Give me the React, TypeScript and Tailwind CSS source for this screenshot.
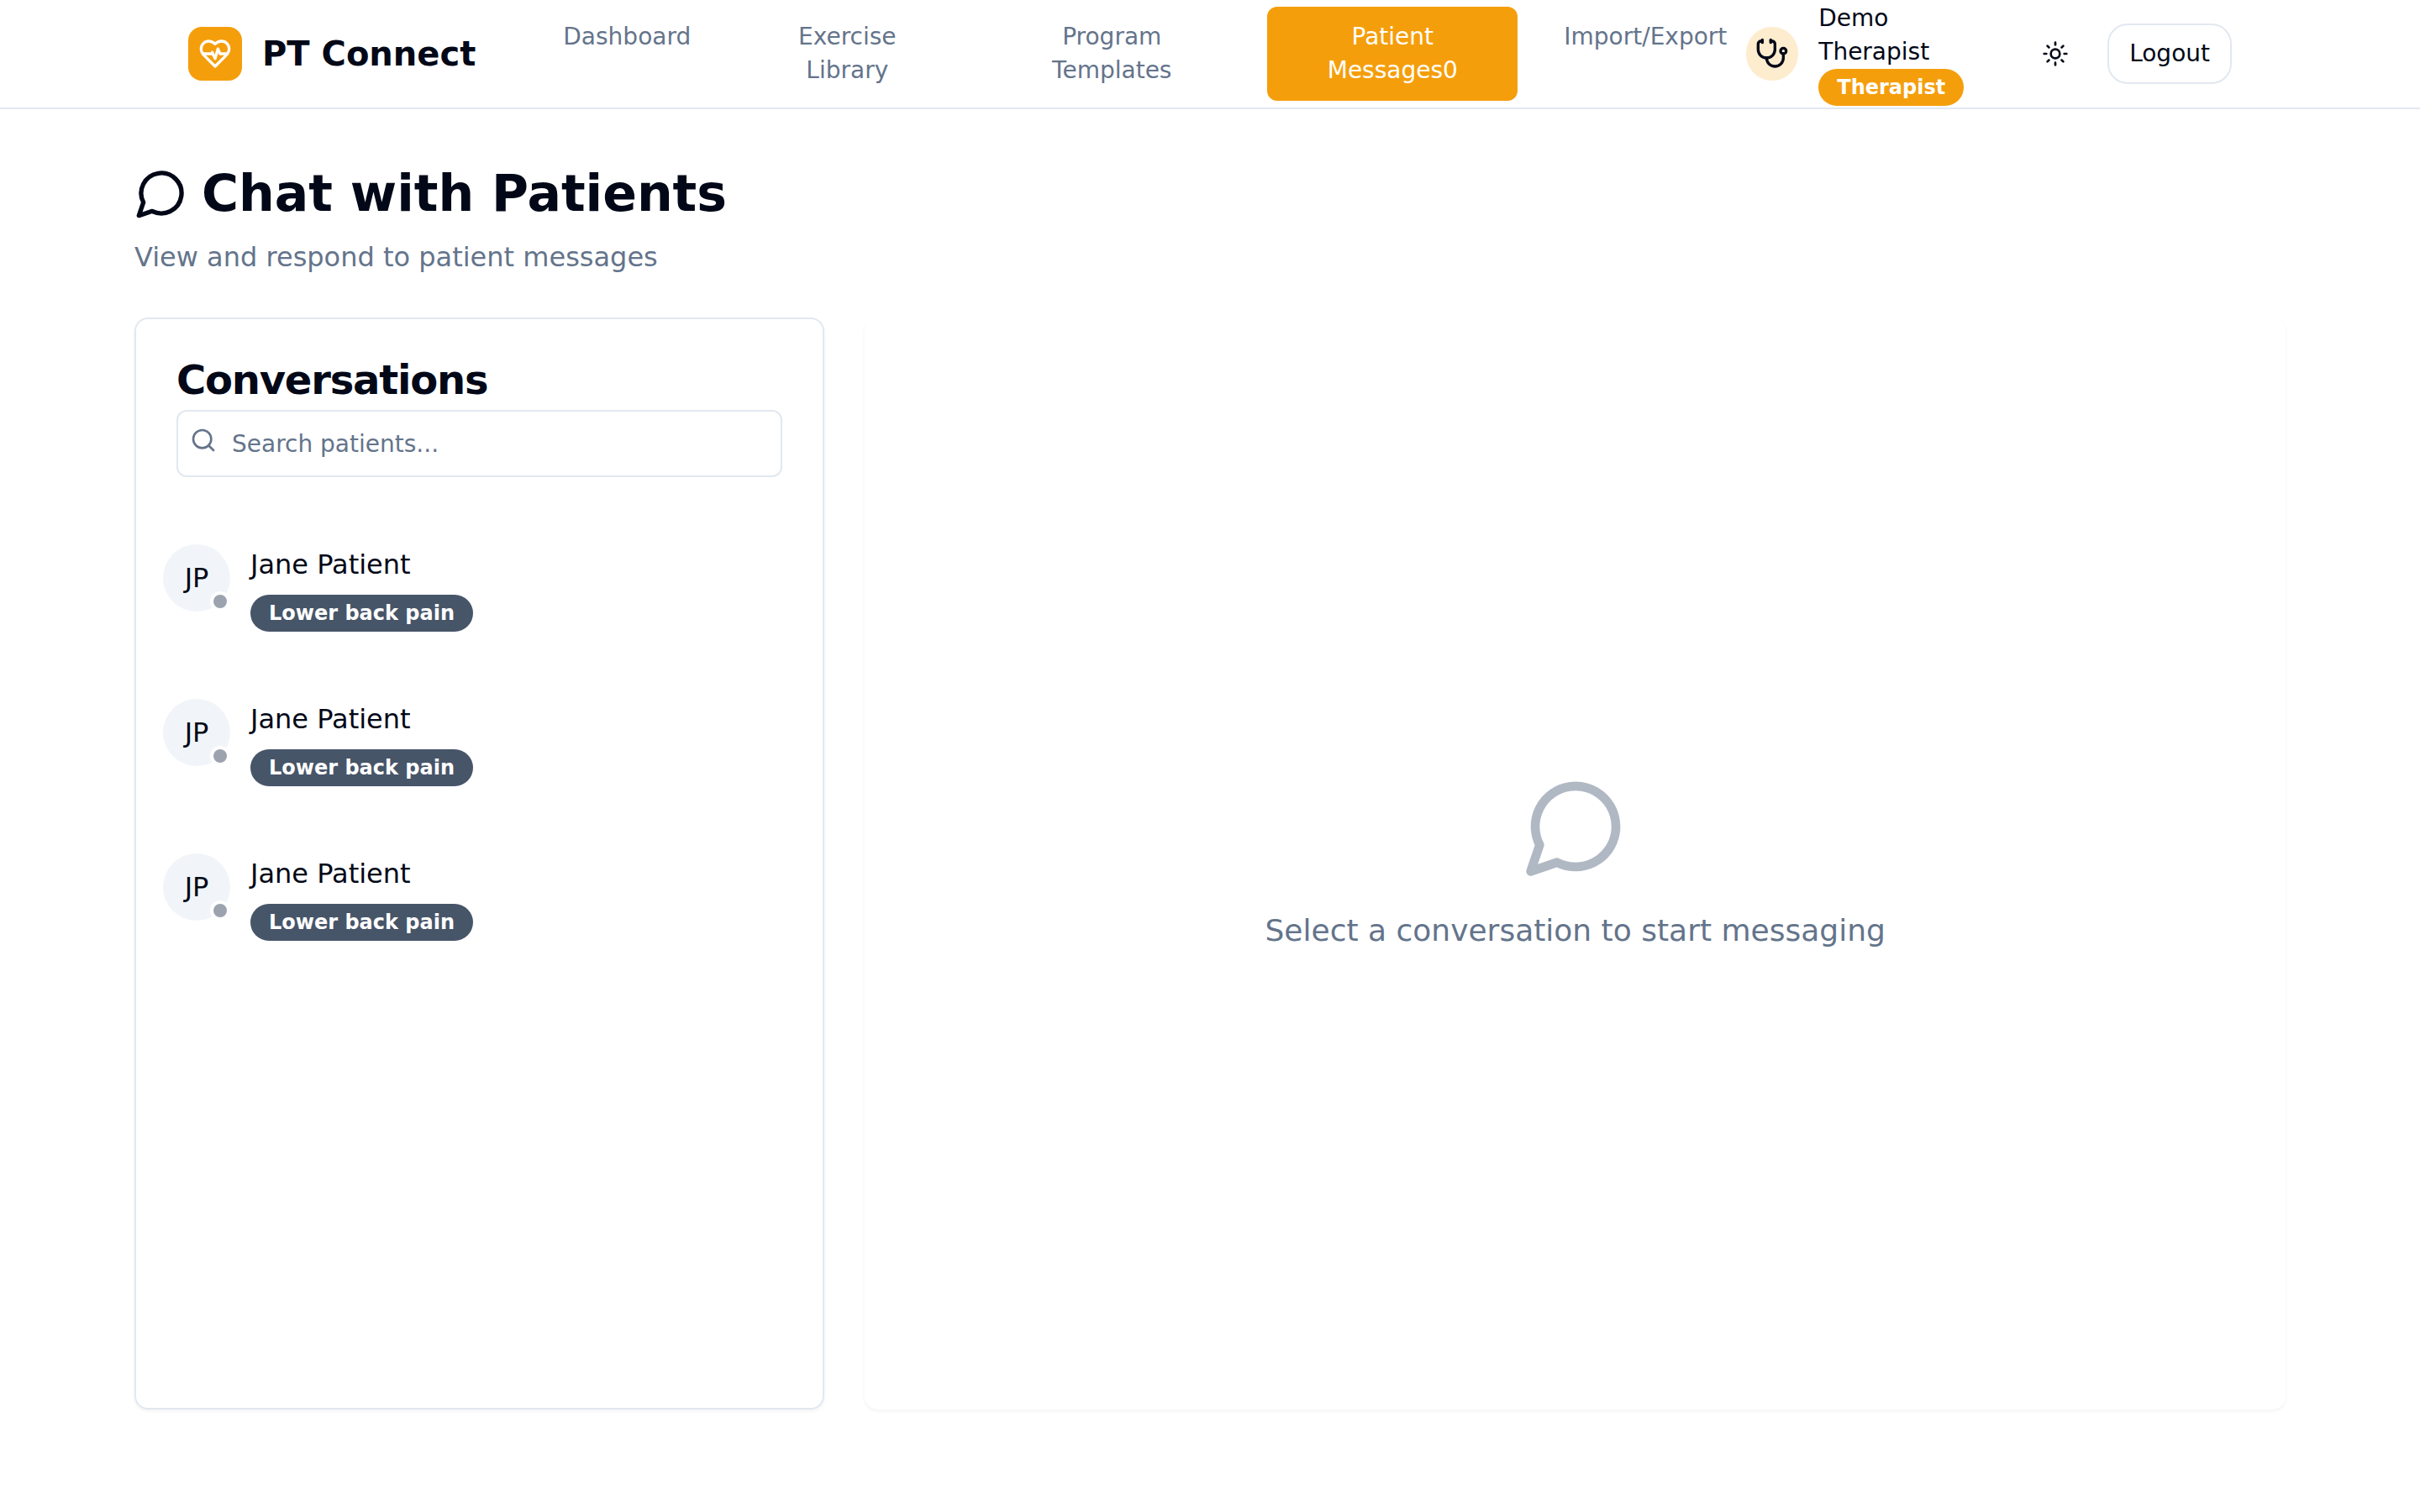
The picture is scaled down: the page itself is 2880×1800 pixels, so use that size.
import React, { useState } from 'react';
import { Search, Stethoscope, Sun } from 'lucide-react';

const navItems = [
  { lines: ['Dashboard'], width: 'w-[248px]' },
  { lines: ['Exercise', 'Library'], width: 'w-[260px]' },
  { lines: ['Program', 'Templates'], width: 'w-[354px]' },
  { lines: ['Patient', 'Messages0'], width: 'w-[298px]', active: true },
  { lines: ['Import/Export'], width: 'w-[288px]' },
];

const patients = [
  { id: 1, name: 'Jane Patient', initials: 'JP', condition: 'Lower back pain' },
  { id: 2, name: 'Jane Patient', initials: 'JP', condition: 'Lower back pain' },
  { id: 3, name: 'Jane Patient', initials: 'JP', condition: 'Lower back pain' },
];

const iconProps = {
  viewBox: '0 0 24 24',
  fill: 'none',
  stroke: 'currentColor',
  strokeWidth: 2,
  strokeLinecap: 'round' as const,
  strokeLinejoin: 'round' as const,
  'aria-hidden': true,
};

function MessageIcon({ className }: { className: string }) {
  return (
    <svg {...iconProps} className={className}>
      <path d="M7.9 20A9 9 0 1 0 4 16.1L2 22Z" />
    </svg>
  );
}

function HeartPulseIcon({ className }: { className: string }) {
  return (
    <svg {...iconProps} className={className}>
      <path d="M19 14c1.49-1.46 3-3.21 3-5.5A5.5 5.5 0 0 0 16.5 3c-1.76 0-3 .5-4.5 2-1.5-1.5-2.74-2-4.5-2A5.5 5.5 0 0 0 2 8.5c0 2.3 1.5 4.05 3 5.5l7 7Z" />
      <path d="M3.22 12H9.5l.5-1 2 4.5 2-7 1.5 3.5h5.27" />
    </svg>
  );
}

function Badge({ className, children }: { className: string; children: React.ReactNode }) {
  return (
    <span className={`inline-flex items-center rounded-full border-2 border-transparent px-5 py-1 text-[24px] leading-8 font-semibold text-white ${className}`}>
      {children}
    </span>
  );
}

function Header() {
  return (
    <header className="border-b-2 border-[#e2e8f0]">
      <div className="mx-auto flex h-32 max-w-[2560px] items-center px-16">
        <div className="flex shrink-0 items-center gap-6">
          <div className="flex size-16 items-center justify-center rounded-2xl bg-[#f59e0b] text-white">
            <HeartPulseIcon className="size-10" />
          </div>
          <span className="text-[40px] leading-14 font-bold">PT Connect</span>
        </div>

        <nav className="ml-14 flex shrink-0 gap-2">
          {navItems.map((item) => (
            <a
              key={item.lines[0]}
              href="#"
              className={`flex flex-col rounded-xl py-4 text-center text-[28px] leading-10 font-medium ${item.width} ${
                item.active ? 'bg-[#f59e0b] text-white' : 'text-[#64748b]'
              }`}
            >
              {item.lines.map((line) => (
                <span key={line}>{line}</span>
              ))}
            </a>
          ))}
        </nav>

        <div className="-ml-6 flex flex-1 items-center justify-between">
          <div className="flex items-center gap-6">
            <div className="flex h-16 w-[62px] items-center justify-center rounded-full bg-[#f59e0b]/20">
              <Stethoscope className="size-10" />
            </div>
            <div className="flex flex-col items-start text-[28px] leading-10 font-medium">
              <span>Demo</span>
              <span>Therapist</span>
              <Badge className="bg-[#f59e0b]">Therapist</Badge>
            </div>
          </div>
          <div className="flex items-center gap-5">
            <button type="button" aria-label="Toggle theme" className="flex h-18 w-21 items-center justify-center rounded-xl">
              <Sun className="size-8" />
            </button>
            <button type="button" className="h-18 rounded-3xl border-2 border-[#e2e8f0] px-6 text-[28px] leading-10 font-medium">
              Logout
            </button>
          </div>
        </div>
      </div>
    </header>
  );
}

function App() {
  const [query, setQuery] = useState('');

  const filtered = patients.filter((patient) =>
    patient.name.toLowerCase().includes(query.toLowerCase())
  );

  return (
    <div className="min-h-screen bg-white font-['DejaVu_Sans',sans-serif] text-[#020817]">
      <Header />

      <main className="mx-auto max-w-[2560px] py-16">
        <h1 className="flex items-center gap-4 text-[60px] leading-18 font-bold">
          <MessageIcon className="size-16" />
          Chat with Patients
        </h1>
        <p className="mt-4 text-[32px] leading-12 text-[#64748b]">
          View and respond to patient messages
        </p>

        <div className="mt-12 grid h-[calc(100vh-500px)] grid-cols-3 gap-12">
          <section className="rounded-2xl border-2 border-[#e2e8f0] shadow-[0_2px_4px_0_rgb(0_0_0/0.05)]">
            <div className="p-12">
              <h2 className="text-[48px] leading-12 font-semibold tracking-tight">Conversations</h2>
              <div className="relative mt-3">
                <Search className="absolute top-5 left-4 size-8 text-[#64748b]" />
                <input
                  type="text"
                  aria-label="Search patients"
                  placeholder="Search patients..."
                  value={query}
                  onChange={(e) => setQuery(e.target.value)}
                  className="h-20 w-full rounded-xl border-2 border-[#e2e8f0] pr-6 pl-16 text-[28px] leading-10 placeholder:text-[#64748b]"
                />
              </div>
            </div>

            <ul>
              {filtered.map((patient) => (
                <li key={patient.id}>
                  <button type="button" className="flex h-46 w-full items-start gap-6 p-8 text-left">
                    <span className="relative flex size-20 items-center justify-center rounded-full bg-[#f1f5f9] text-[32px] leading-12">
                      {patient.initials}
                      <span className="absolute right-0 bottom-0 size-6 rounded-full border-4 border-white bg-[#9ca3af]" />
                    </span>
                    <span className="flex flex-col items-start gap-3">
                      <span className="text-[32px] leading-12 font-medium">{patient.name}</span>
                      <Badge className="bg-[#475569]">{patient.condition}</Badge>
                    </span>
                  </button>
                </li>
              ))}
            </ul>
          </section>

          <section className="col-span-2 flex flex-col items-center justify-center gap-8 rounded-2xl text-[#64748b] shadow-[0_2px_4px_0_rgb(0_0_0/0.05)]">
            <MessageIcon className="size-32 opacity-50" />
            <p className="text-[36px] leading-14">Select a conversation to start messaging</p>
          </section>
        </div>
      </main>
    </div>
  );
}

export default App;
